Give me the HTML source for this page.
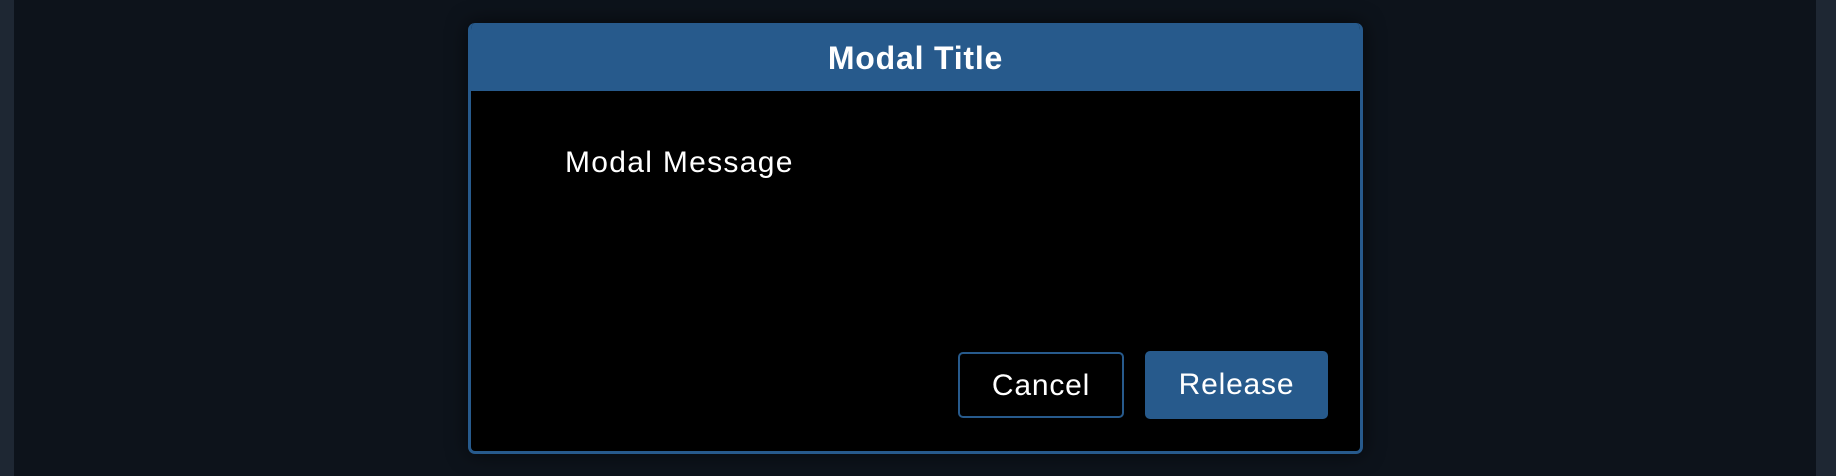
<!DOCTYPE html>
<html><head><style>
html,body{margin:0;padding:0;width:1836px;height:476px;overflow:hidden;background:#0d131b;font-family:"Liberation Sans",sans-serif;}
.side{position:absolute;left:0;top:0;width:14px;height:476px;background:#1e2733;}
.side.r{left:1816px;width:20px;}
.modal{position:absolute;left:468px;top:23px;width:895px;height:431px;box-sizing:border-box;border:3px solid #275a8c;border-top:none;border-radius:7px;background:#000;box-shadow:0 0 20px rgba(0,0,0,.6);overflow:hidden;}
.hd{height:68px;background:#275a8c;color:#fff;font-weight:bold;font-size:32px;text-align:center;line-height:70px;letter-spacing:0.8px;margin:0 -3px;}
.msg{position:absolute;left:94px;top:123px;color:#fff;font-size:30px;letter-spacing:1.3px;}
.btn{position:absolute;top:329px;height:66px;box-sizing:border-box;border-radius:5px;color:#fff;font-size:30px;text-align:center;line-height:64px;letter-spacing:0.8px;}
.c{left:487px;width:166px;border:2px solid #275a8c;}
.rl{left:674px;width:183px;background:#275a8c;height:68px;top:328px;line-height:68px;}
</style></head><body>
<div class="side"></div><div class="side r"></div>
<div class="modal">
<div class="hd">Modal Title</div>
<div class="msg">Modal Message</div>
<div class="btn c">Cancel</div>
<div class="btn rl">Release</div>
</div>
</body></html>
